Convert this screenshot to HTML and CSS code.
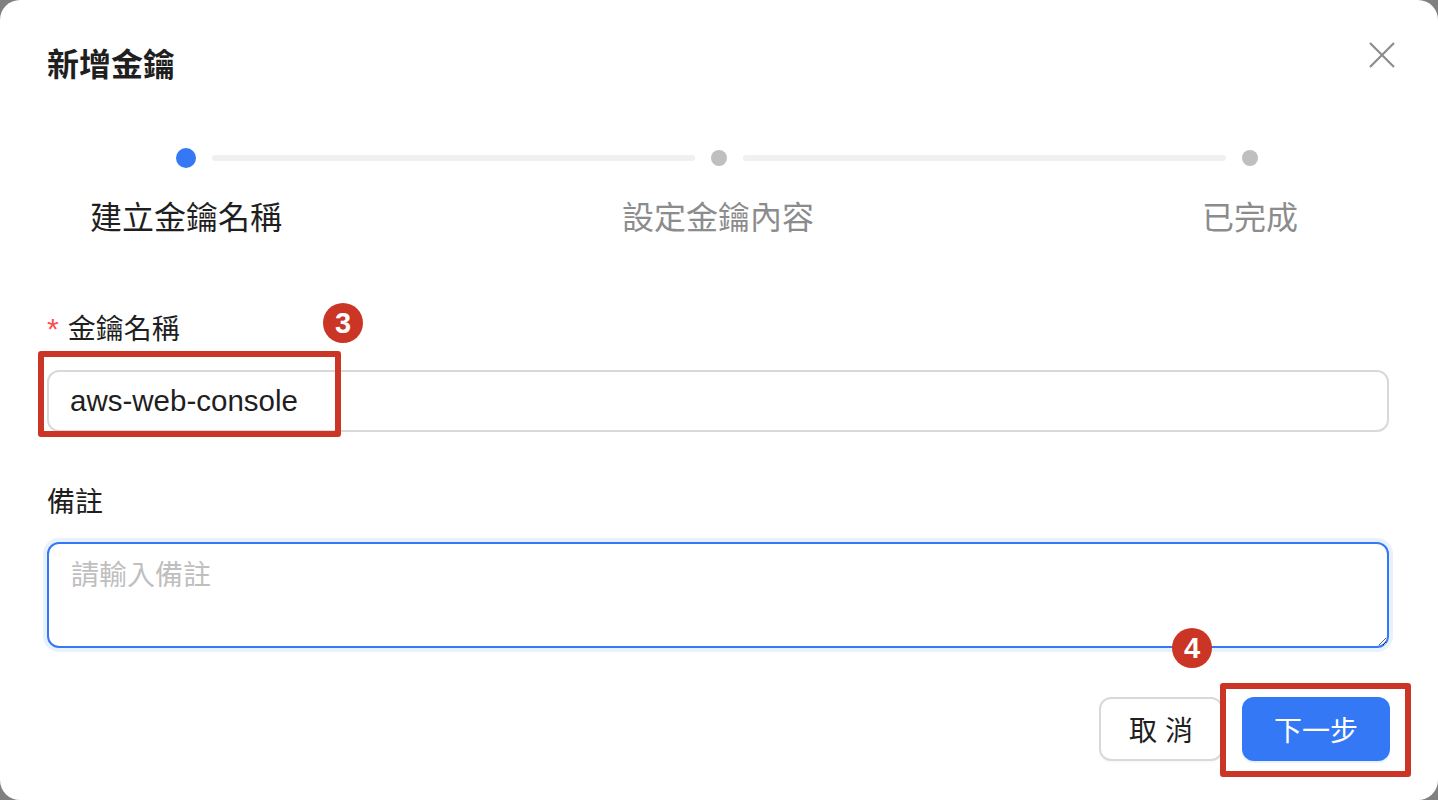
FILE: index.html
```html
<!DOCTYPE html>
<html>
<head>
  <meta charset="UTF-8">
  <meta name="viewport" content="width=device-width, initial-scale=1.0">
  <title>新增金鑰</title>
  <link rel="stylesheet" href="styles.css">
</head>
<body>
  <div class="modal">
    <h2 class="modal-title">新增金鑰</h2>
    <button class="close-btn" aria-label="close">
      <svg width="26" height="26" viewBox="0 0 26 26"><path d="M1 1 L25 25 M25 1 L1 25" stroke="#8c8c8c" stroke-width="2.2" fill="none"/></svg>
    </button>

    <div class="steps">
      <div class="step-dots">
        <span class="dot dot-active"></span>
        <span class="tail"></span>
        <span class="dot"></span>
        <span class="tail"></span>
        <span class="dot"></span>
      </div>
      <div class="step-labels">
        <span class="step-label active">建立金鑰名稱</span>
        <span class="step-label">設定金鑰內容</span>
        <span class="step-label">已完成</span>
      </div>
    </div>

    <form class="key-form">
      <label class="field-label" for="keyName"><span class="required">*</span>金鑰名稱</label>
      <input class="text-input" id="keyName" type="text" value="aws-web-console">

      <label class="field-label note-label" for="keyNote">備註</label>
      <textarea class="text-area focused" id="keyNote" placeholder="請輸入備註"></textarea>

      <div class="actions">
        <button type="button" class="btn btn-default">取 消</button>
        <button type="button" class="btn btn-primary">下一步</button>
      </div>
    </form>

    <div class="mark mark-input"></div>
    <div class="mark mark-next"></div>
    <span class="badge badge-3">3</span>
    <span class="badge badge-4">4</span>
  </div>
</body>
</html>
```

FILE: styles.css
```css
html, body {
  margin: 0;
  height: 100%;
}
body {
  background-color: #808080;
  font-family: "Liberation Sans", "Noto Sans CJK TC", sans-serif;
  color: #1f1f1f;
}
.modal {
  position: relative;
  box-sizing: border-box;
  width: 1438px;
  height: 800px;
  background: #fff;
  border-radius: 20px;
  padding: 40px 49px 0 47px;
}
.modal-title {
  margin: 0;
  font-size: 32px;
  line-height: 50px;
  font-weight: bold;
  color: #1f1f1f;
}
.close-btn {
  position: absolute;
  top: 42px;
  left: 1369px;
  padding: 0;
  border: none;
  background: none;
  width: 26px;
  height: 26px;
}

/* steps */
.steps {
  margin-top: 58px;
  padding: 0 19px 0 19px;
}
.step-dots {
  display: flex;
  align-items: center;
  height: 20px;
  padding: 0 112px 0 110px;
}
.dot {
  flex: none;
  width: 16px;
  height: 16px;
  border-radius: 50%;
  background: #bfbfbf;
}
.dot-active {
  width: 20px;
  height: 20px;
  background: #3478f6;
}
.tail {
  flex: 1;
  height: 6px;
  border-radius: 3px;
  background: #f0f0f0;
  margin: 0 16px;
}
.tail:first-of-type {
  margin-left: 14px;
}
.step-labels {
  display: flex;
  justify-content: space-between;
  margin-top: 30px;
}
.step-label {
  width: 240px;
  text-align: center;
  font-size: 32px;
  line-height: 40px;
  color: #8c8c8c;
}
.step-label.active {
  color: #1f1f1f;
}

/* form */
.key-form {
  display: flex;
  flex-direction: column;
  margin-top: 72px;
}
.field-label {
  display: block;
  height: 40px;
  font-size: 28px;
  line-height: 40px;
  color: #1f1f1f;
}
.required {
  color: #ff4d4f;
  margin-right: 9px;
  font-size: 30px;
  line-height: 0;
}
.text-input,
.text-area {
  box-sizing: border-box;
  width: 100%;
  border: 2px solid #d9d9d9;
  border-radius: 12px;
  font-family: inherit;
  font-size: 28px;
  color: #1f1f1f;
  outline: none;
}
.text-input {
  margin-top: 20px;
  height: 62px;
  padding: 0 21px;
  font-size: 29.5px;
}
.note-label {
  margin-top: 51px;
}
.text-area {
  margin-top: 19px;
  height: 106px;
  padding: 14px 22px;
  resize: vertical;
  line-height: 36px;
}
.text-area::placeholder {
  color: #bfbfbf;
}
.text-area.focused {
  border-color: #3478f6;
  box-shadow: 0 0 0 4px #e8f1fe;
}
.actions {
  display: flex;
  justify-content: flex-end;
  gap: 19px;
  margin-top: 49px;
  margin-right: -1px;
}
.btn {
  height: 64px;
  border-radius: 12px;
  font-family: inherit;
  font-size: 28px;
  cursor: pointer;
}
.btn-default {
  width: 124px;
  background: #fff;
  border: 2px solid #d9d9d9;
  color: #1f1f1f;
  box-shadow: 0 2px 0 rgba(0, 0, 0, 0.02);
}
.btn-primary {
  width: 148px;
  background: #3478f6;
  border: none;
  color: #fff;
  box-shadow: 0 2px 0 rgba(5, 145, 255, 0.1);
}

/* annotation marks */
.mark {
  position: absolute;
  box-sizing: border-box;
  border: 6px solid #cb3526;
  border-radius: 3px;
}
.mark-input {
  left: 38px;
  top: 351px;
  width: 303px;
  height: 86px;
}
.mark-next {
  left: 1220px;
  top: 683px;
  width: 191px;
  height: 94px;
}
.badge {
  position: absolute;
  width: 40px;
  height: 40px;
  border-radius: 50%;
  background: #cb3526;
  color: #fff;
  font-size: 29px;
  font-weight: bold;
  line-height: 40px;
  text-align: center;
}
.badge-3 {
  left: 323px;
  top: 303px;
}
.badge-4 {
  left: 1172px;
  top: 628px;
}
```
